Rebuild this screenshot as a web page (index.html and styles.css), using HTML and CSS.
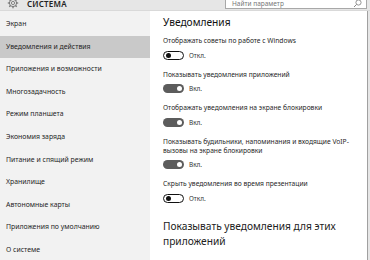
FILE: index.html
```html
<!DOCTYPE html>
<html lang="ru">
<head>
<meta charset="utf-8">
<link rel="stylesheet" href="styles.css">
</head>
<body>
<div class="window">
  <div class="topbar">
    <div class="brand">
      <svg class="gear" width="12" height="12" viewBox="0 0 12 12"><circle cx="6" cy="6" r="3.6" fill="none" stroke="#777" stroke-width="1"/><circle cx="6" cy="6" r="1.6" fill="none" stroke="#777" stroke-width="0.9"/><g stroke="#777" stroke-width="1.3"><line x1="6" y1="0.8" x2="6" y2="2.6"/><line x1="6" y1="9.4" x2="6" y2="11.2"/><line x1="0.8" y1="6" x2="2.6" y2="6"/><line x1="9.4" y1="6" x2="11.2" y2="6"/><line x1="2.3" y1="2.3" x2="3.5" y2="3.5"/><line x1="8.5" y1="8.5" x2="9.7" y2="9.7"/><line x1="9.7" y1="2.3" x2="8.5" y2="3.5"/><line x1="2.3" y1="9.7" x2="3.5" y2="8.5"/></g></svg>
      <span class="title">СИСТЕМА</span>
    </div>
    <div class="search">
      <span class="placeholder">Найти параметр</span>
      <svg class="mag" width="9" height="9" viewBox="0 0 9 9"><circle cx="5.5" cy="3.5" r="2.6" fill="none" stroke="#888" stroke-width="0.9"/><line x1="3.6" y1="5.4" x2="1" y2="8" stroke="#888" stroke-width="1"/></svg>
    </div>
  </div>
  <div class="main">
    <nav class="sidebar">
      <div class="item">Экран</div>
      <div class="item active">Уведомления и действия</div>
      <div class="item">Приложения и возможности</div>
      <div class="item">Многозадачность</div>
      <div class="item">Режим планшета</div>
      <div class="item">Экономия заряда</div>
      <div class="item">Питание и спящий режим</div>
      <div class="item">Хранилище</div>
      <div class="item">Автономные карты</div>
      <div class="item">Приложения по умолчанию</div>
      <div class="item">О системе</div>
    </nav>
    <section class="content">
      <h1 class="heading">Уведомления</h1>
      <div class="setting">
        <div class="label">Отображать советы по работе с Windows</div>
        <div class="toggle-row"><span class="toggle off"><span class="knob"></span></span><span class="state">Откл.</span></div>
      </div>
      <div class="setting">
        <div class="label">Показывать уведомления приложений</div>
        <div class="toggle-row"><span class="toggle on"><span class="knob"></span></span><span class="state">Вкл.</span></div>
      </div>
      <div class="setting">
        <div class="label">Отображать уведомления на экране блокировки</div>
        <div class="toggle-row"><span class="toggle on"><span class="knob"></span></span><span class="state">Вкл.</span></div>
      </div>
      <div class="setting">
        <div class="label wrap">Показывать будильники, напоминания и входящие VoIP-вызовы на экране блокировки</div>
        <div class="toggle-row"><span class="toggle on"><span class="knob"></span></span><span class="state">Вкл.</span></div>
      </div>
      <div class="setting">
        <div class="label">Скрыть уведомления во время презентации</div>
        <div class="toggle-row"><span class="toggle off"><span class="knob"></span></span><span class="state">Откл.</span></div>
      </div>
      <h2 class="subheading">Показывать уведомления для этих приложений</h2>
    </section>
    <div class="edge"></div>
  </div>
</div>
</body>
</html>
```
FILE: styles.css
```css
* { box-sizing: border-box; }
html, body { margin: 0; padding: 0; }
body {
  width: 370px;
  height: 260px;
  overflow: hidden;
  background: #fff;
  font-family: "Noto Sans", "Open Sans", sans-serif;
  color: #1a1a1a;
}
.window { width: 370px; height: 260px; display: flex; flex-direction: column; }
.topbar {
  height: 11px;
  background: #e6e6e6;
  border-bottom: 1px solid #d9d9d9;
  display: flex;
  align-items: flex-end;
  justify-content: space-between;
  overflow: hidden;
  flex: none;
}
.brand { display: flex; align-items: center; gap: 8px; padding-left: 7px; margin-bottom: 1px; }
.gear { display: block; margin-top: -6px; }
.title { font-size: 8px; font-weight: 600; letter-spacing: 0.2px; color: #222; line-height: 8px; margin-top: -5px; }
.search {
  width: 142px;
  height: 18px;
  margin-right: 3px;
  margin-bottom: 1px;
  background: #fff;
  border: 1px solid #a8a8a8;
  display: flex;
  align-items: flex-end;
  justify-content: space-between;
  padding: 0 4px 0 6px;
}
.placeholder { font-size: 6.5px; color: #777; line-height: 8px; }
.main { flex: 1; display: flex; min-height: 0; }
.sidebar {
  width: 150px;
  background: #f2f2f2;
  display: flex;
  flex-direction: column;
  padding-top: 2px;
  flex: none;
}
.item {
  height: 22.6px;
  line-height: 22.6px;
  font-size: 6.9px;
  padding-left: 6px;
  color: #1f1f1f;
  white-space: nowrap;
}
.item.active { background: #c9c9c9; }
.content {
  flex: 1;
  padding: 2px 0 0 13px;
}
.heading { font-size: 10.2px; font-weight: 400; margin: 0 0 5px; line-height: 18px; color: #111; }
.setting { margin-bottom: 5.5px; }
.label { font-size: 6.7px; line-height: 10px; color: #1f1f1f; white-space: nowrap; }
.label.wrap { white-space: normal; width: 190px; line-height: 9.5px; }
.toggle-row { display: flex; align-items: center; gap: 5px; height: 18px; }
.toggle {
  width: 21px;
  height: 9px;
  border-radius: 5px;
  display: flex;
  align-items: center;
  padding: 0 2px;
}
.toggle.off { border: 1.3px solid #111; justify-content: flex-start; }
.toggle.off .knob { width: 5px; height: 5px; border-radius: 50%; background: #111; }
.toggle.on { background: #5c5c5c; justify-content: flex-end; }
.toggle.on .knob { width: 5px; height: 5px; border-radius: 50%; background: #fff; }
.state { font-size: 6.4px; color: #333; }
.subheading { font-size: 10.2px; font-weight: 400; margin: 11.5px 0 0; line-height: 15px; color: #222; width: 180px; }
.edge { width: 3px; background: #e6e6e6; border-left: 1px solid #a0a0a0; flex: none; }
```
